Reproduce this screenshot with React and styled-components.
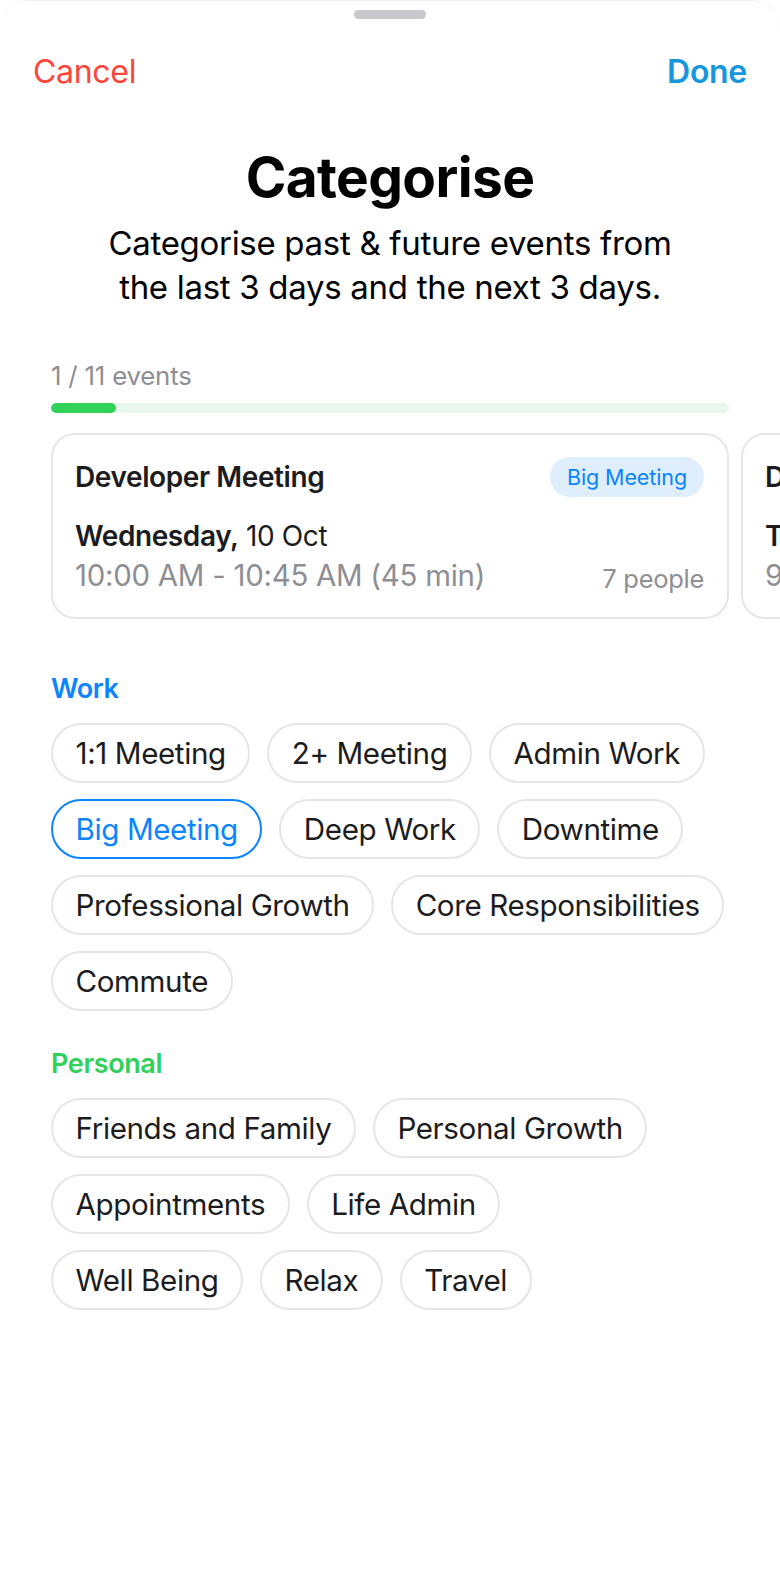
import React from "react";
import styled, { createGlobalStyle } from "styled-components";

const Global = createGlobalStyle`
  html, body { margin: 0; padding: 0; background: #ffffff; }
  body { font-family: Inter, "Noto Sans", "Liberation Sans", sans-serif; -webkit-font-smoothing: antialiased; }
  * { box-sizing: border-box; }
`;

const Sheet = styled.div`
  min-height: 1592px;
  background: #ffffff;
  border-radius: 28px 28px 0 0;
  border-top: 1px solid #f1f1f3;
  display: flex;
  flex-direction: column;
  overflow: hidden;
`;

const Handle = styled.div`
  width: 72px;
  height: 9px;
  border-radius: 5px;
  background: #c7c7cc;
  margin: 9px auto 0;
`;

const NavBar = styled.div`
  display: flex;
  justify-content: space-between;
  align-items: center;
  padding: 0 33px;
  margin-top: 32px;
  height: 40px;
`;

const NavButton = styled.button`
  border: none;
  background: none;
  padding: 0;
  font-family: inherit;
  font-size: 32px;
  letter-spacing: -0.3px;
  font-weight: ${(p) => (p.$strong ? 600 : 400)};
  color: ${(p) => p.$color};
`;

const Header = styled.div`
  display: flex;
  flex-direction: column;
  align-items: center;
  margin-top: 52px;
  text-align: center;
`;

const Title = styled.h1`
  margin: 0;
  font-size: 55px;
  line-height: 68px;
  font-weight: 700;
  letter-spacing: -0.6px;
  color: #000;
`;

const Subtitle = styled.p`
  margin: 10px 0 0;
  font-size: 33px;
  line-height: 44px;
  letter-spacing: -0.3px;
  color: #000;
  width: 600px;
`;

const Body = styled.div`
  padding: 0 51px;
  display: flex;
  flex-direction: column;
`;

const ProgressLabel = styled.div`
  margin-top: 51px;
  font-size: 25.8px;
  line-height: 32px;
  color: #8e8e93;
  letter-spacing: -0.2px;
`;

const Track = styled.div`
  margin-top: 11px;
  height: 10px;
  border-radius: 5px;
  background: #e8f8ec;
  overflow: hidden;
`;

const Fill = styled.div`
  height: 100%;
  border-radius: 5px;
  background: #30d158;
`;

const Carousel = styled.div`
  margin-top: 20px;
  display: flex;
  gap: 12px;
  width: calc(100% + 51px);
  overflow: hidden;
`;

const Card = styled.div`
  flex: 0 0 678px;
  height: 186px;
  border: 2px solid #e5e5ea;
  border-radius: 24px;
  padding: 22px 23px 20px 22px;
  display: flex;
  flex-direction: column;
`;

const CardTop = styled.div`
  display: flex;
  justify-content: space-between;
  align-items: center;
  height: 40px;
`;

const EventName = styled.div`
  font-size: 28px;
  font-weight: 600;
  letter-spacing: -0.4px;
  color: #1c1c1e;
`;

const Badge = styled.span`
  display: inline-flex;
  align-items: center;
  height: 40px;
  padding: 0 17px;
  border-radius: 20px;
  background: #dfeefd;
  color: #0a84ff;
  font-size: 21.5px;
  letter-spacing: -0.1px;
`;

const DateLine = styled.div`
  margin-top: 19px;
  font-size: 28px;
  line-height: 40px;
  letter-spacing: -0.4px;
  color: #1c1c1e;
  white-space: nowrap;
  & b { font-weight: 600; }
`;

const TimeRow = styled.div`
  display: flex;
  justify-content: space-between;
  align-items: baseline;
  line-height: 40px;
  white-space: nowrap;
`;

const TimeText = styled.span`
  font-size: 29.4px;
  letter-spacing: -0.25px;
  color: #8e8e93;
`;

const People = styled.span`
  font-size: 25.5px;
  letter-spacing: -0.3px;
  color: #8e8e93;
  position: relative;
  top: 2px;
`;

const SectionLabel = styled.div`
  margin-top: ${(p) => p.$top}px;
  font-size: 27px;
  line-height: 34px;
  font-weight: 600;
  letter-spacing: -0.4px;
  color: ${(p) => p.$color};
`;

const ChipGrid = styled.div`
  margin-top: 17px;
  display: flex;
  flex-direction: column;
  gap: 16px;
`;

const ChipRow = styled.div`
  display: flex;
  gap: 17px;
`;

const Chip = styled.button`
  height: 60px;
  padding: 0 22.5px;
  border-radius: 30px;
  background: #fff;
  border: 2px solid ${(p) => (p.$selected ? "#0a84ff" : "#e5e5ea")};
  color: ${(p) => (p.$selected ? "#0a84ff" : "#1c1c1e")};
  font-family: inherit;
  font-size: 29.6px;
  letter-spacing: -0.4px;
  white-space: nowrap;
`;

const work = [
  ["1:1 Meeting", "2+ Meeting", "Admin Work"],
  ["Big Meeting", "Deep Work", "Downtime"],
  ["Professional Growth", "Core Responsibilities"],
  ["Commute"],
];

const personal = [
  ["Friends and Family", "Personal Growth"],
  ["Appointments", "Life Admin"],
  ["Well Being", "Relax", "Travel"],
];

const events = [
  {
    name: "Developer Meeting",
    tag: "Big Meeting",
    day: "Wednesday,",
    date: "10 Oct",
    time: "10:00 AM - 10:45 AM (45 min)",
    people: "7 people",
  },
  {
    name: "Design Review",
    tag: "2+ Meeting",
    day: "Thursday,",
    date: "11 Oct",
    time: "9:00 AM - 9:30 AM (30 min)",
    people: "4 people",
  },
];

function Chips({ rows, selected }) {
  return (
    <ChipGrid>
      {rows.map((row, i) => (
        <ChipRow key={i}>
          {row.map((c) => (
            <Chip key={c} $selected={c === selected}>
              {c}
            </Chip>
          ))}
        </ChipRow>
      ))}
    </ChipGrid>
  );
}

export default function App() {
  const progress = 65 / 678;
  return (
    <>
      <Global />
      <Sheet>
        <Handle />
        <NavBar>
          <NavButton $color="#ff453a">Cancel</NavButton>
          <NavButton $color="#1896dd" $strong>
            Done
          </NavButton>
        </NavBar>
        <Header>
          <Title>Categorise</Title>
          <Subtitle>
            Categorise past &amp; future events from the last 3 days and the next 3 days.
          </Subtitle>
        </Header>
        <Body>
          <ProgressLabel>1 / 11 events</ProgressLabel>
          <Track>
            <Fill style={{ width: `${progress * 100}%` }} />
          </Track>
          <Carousel>
            {events.map((e) => (
              <Card key={e.name}>
                <CardTop>
                  <EventName>{e.name}</EventName>
                  <Badge>{e.tag}</Badge>
                </CardTop>
                <DateLine>
                  <b>{e.day}</b> {e.date}
                </DateLine>
                <TimeRow>
                  <TimeText>{e.time}</TimeText>
                  <People>{e.people}</People>
                </TimeRow>
              </Card>
            ))}
          </Carousel>
          <SectionLabel $color="#0a84ff" $top={53}>
            Work
          </SectionLabel>
          <Chips rows={work} selected="Big Meeting" />
          <SectionLabel $color="#30d158" $top={36}>
            Personal
          </SectionLabel>
          <Chips rows={personal} />
        </Body>
      </Sheet>
    </>
  );
}
